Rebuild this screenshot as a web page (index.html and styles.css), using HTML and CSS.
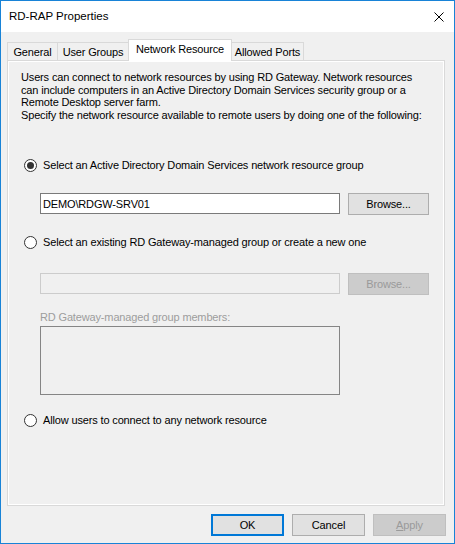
FILE: index.html
```html
<!DOCTYPE html>
<html lang="en">
<head>
    <meta charset="UTF-8">
    <title>RD-RAP Properties</title>
    <link rel="stylesheet" href="styles.css">
</head>
<body>
    <div class="window">
        <!-- Title bar -->
        <div class="titlebar">
            <span class="title">RD-RAP Properties</span>
            <svg class="close" width="10" height="10" viewBox="0 0 10 10">
                <path d="M0.5 0.5L9.5 9.5M9.5 0.5L0.5 9.5" stroke="#000" stroke-width="1" fill="none"/>
            </svg>
        </div>

        <div class="dialog">
            <!-- Tabs -->
            <div class="tabs">
                <div class="tab tab-general">General</div>
                <div class="tab tab-groups">User Groups</div>
                <div class="tab tab-resource active">Network Resource</div>
                <div class="tab tab-ports">Allowed Ports</div>
            </div>

            <!-- Tab page -->
            <div class="panel">
                <p class="intro">Users can connect to network resources by using RD Gateway. Network resources<br>can include computers in an Active Directory Domain Services security group or a<br>Remote Desktop server farm.<br>Specify the network resource available to remote users by doing one of the following:</p>

                <div class="option option-ad">
                    <span class="radio checked"></span>
                    <span>Select an Active Directory Domain Services network resource group</span>
                </div>
                <div class="field-row row-ad">
                    <div class="textbox">DEMO\RDGW-SRV01</div>
                    <button class="btn browse">Browse...</button>
                </div>

                <div class="option option-managed">
                    <span class="radio"></span>
                    <span>Select an existing RD Gateway-managed group or create a new one</span>
                </div>
                <div class="field-row row-managed">
                    <div class="textbox disabled"></div>
                    <button class="btn browse disabled">Browse...</button>
                </div>

                <div class="members-label">RD Gateway-managed group members:</div>
                <div class="listbox"></div>

                <div class="option option-any">
                    <span class="radio"></span>
                    <span>Allow users to connect to any network resource</span>
                </div>
            </div>

            <!-- Dialog buttons -->
            <div class="buttons">
                <button class="btn default">OK</button>
                <button class="btn">Cancel</button>
                <button class="btn disabled"><u>A</u>pply</button>
            </div>
        </div>
    </div>
</body>
</html>
```

FILE: styles.css
```css
* {
    box-sizing: border-box;
}

body {
    margin: 0;
    font-family: "Liberation Sans", Arial, sans-serif;
    font-size: 11px;
    letter-spacing: -0.15px;
    color: #000;
    background: #fff;
}

.window {
    width: 455px;
    height: 544px;
    border: 1px solid #1883d7;
    background: #f0f0f0;
    display: flex;
    flex-direction: column;
}

.titlebar {
    height: 31px;
    background: #fff;
    display: flex;
    align-items: center;
    justify-content: space-between;
    padding: 0 10px 0 8px;
}

.title {
    font-size: 11.5px;
    letter-spacing: 0;
    padding-bottom: 1px;
}

.dialog {
    flex: 1;
    padding: 7px 9px 0 6px;
    display: flex;
    flex-direction: column;
}

/* Tabs */
.tabs {
    display: flex;
    align-items: flex-end;
    height: 22px;
    margin-bottom: -1px;
    position: relative;
    z-index: 1;
}

.tab {
    height: 18px;
    margin-bottom: 1px;
    border: 1px solid #d9d9d9;
    border-bottom: none;
    background: #f0f0f0;
    display: flex;
    align-items: center;
    justify-content: center;
    padding-top: 1px;
    white-space: nowrap;
}

.tab + .tab {
    margin-left: -1px;
}

.tab-general {
    width: 51px;
}

.tab-groups {
    width: 72px;
}

.tab-resource {
    width: 104px;
}

.tab-ports {
    width: 73px;
}

.tab.active {
    height: 22px;
    margin-bottom: 0;
    background: #fff;
    position: relative;
    z-index: 2;
    padding-top: 0;
    padding-bottom: 3px;
}

/* Tab page */
.panel {
    height: 446px;
    border: 1px solid #d9d9d9;
    box-shadow: inset 0 0 0 1px #fff;
    padding: 10px 13px 0 13px;
}

.intro {
    margin: 0;
    line-height: 12.5px;
    white-space: nowrap;
}

.option {
    display: flex;
    align-items: center;
    height: 14px;
    margin-left: 3px;
    white-space: nowrap;
}

.radio {
    width: 13px;
    height: 13px;
    border: 1px solid #333;
    border-radius: 50%;
    background: #fff;
    margin-right: 6px;
    display: flex;
    align-items: center;
    justify-content: center;
    flex-shrink: 0;
}

.radio.checked::after {
    content: "";
    width: 7px;
    height: 7px;
    border-radius: 50%;
    background: #333;
}

.option-ad {
    margin-top: 37px;
}

.option-managed {
    margin-top: 20px;
}

.option-any {
    margin-top: 18px;
}

.field-row {
    display: flex;
    align-items: flex-start;
    gap: 8px;
    margin-left: 19px;
}

.row-ad {
    margin-top: 21px;
}

.row-managed {
    margin-top: 24px;
}

.textbox {
    width: 300px;
    height: 21px;
    border: 1px solid #7a7a7a;
    background: #fff;
    padding: 0 2px;
    display: flex;
    align-items: center;
}

.textbox.disabled {
    border-color: #cccccc;
    background: #f0f0f0;
}

.members-label {
    margin: 16px 0 0 19px;
    line-height: 13px;
    color: #9d9d9d;
}

.listbox {
    width: 300px;
    height: 69px;
    margin: 2px 0 0 19px;
    border: 1px solid #858585;
    background: #f0f0f0;
}

/* Buttons */
.btn {
    height: 22px;
    border: 1px solid #adadad;
    background: #e1e1e1;
    font-family: inherit;
    font-size: 11px;
    letter-spacing: inherit;
    color: #000;
    padding: 0;
}

.btn.browse {
    width: 81px;
}

.btn.disabled {
    background: #cccccc;
    border-color: #bfbfbf;
    color: #9a9a9a;
}

.btn.default {
    border-color: #0078d7;
    box-shadow: inset 0 0 0 1px #0078d7;
}

.buttons {
    display: flex;
    justify-content: flex-end;
    gap: 8px;
    margin-top: 8px;
    margin-right: -1px;
}

.buttons .btn {
    width: 73px;
}
```
